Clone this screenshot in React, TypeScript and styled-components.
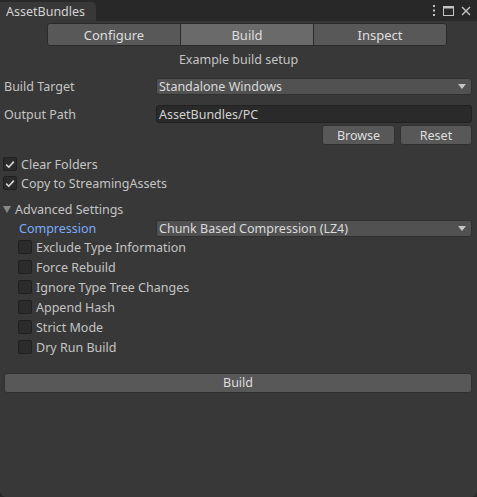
import styled, { createGlobalStyle } from 'styled-components';

const GlobalStyle = createGlobalStyle`
  html, body {
    margin: 0;
    padding: 0;
    background: #282828;
  }
  body {
    font-family: "Noto Sans", "Open Sans", sans-serif;
    font-size: 12.5px;
    color: #c4c4c4;
  }
`;

const Window = styled.div`
  width: 477px;
  height: 497px;
  background: #383838;
  border-radius: 0 0 6px 6px;
  overflow: hidden;
  display: flex;
  flex-direction: column;
`;

const TabBar = styled.div`
  height: 21px;
  background: #282828;
  display: flex;
  align-items: flex-end;
  justify-content: space-between;
`;

const Tab = styled.div`
  height: 19px;
  width: 96px;
  box-sizing: border-box;
  padding-left: 6px;
  background: #383838;
  border-radius: 0 5px 0 0;
  line-height: 19px;
  color: #d2d2d2;
`;

const WindowIcons = styled.div`
  display: flex;
  align-items: center;
  gap: 7px;
  height: 21px;
  padding-right: 6px;
`;

const Toolbar = styled.div`
  display: flex;
  margin: 2px 0 0 47px;
  width: 400px;
  height: 23px;
`;

const ToolButton = styled.div<{ $active?: boolean }>`
  flex: 1;
  box-sizing: border-box;
  display: flex;
  align-items: center;
  justify-content: center;
  background: ${(p) => (p.$active ? '#6a6a6a' : '#585858')};
  border: 1px solid #2a2a2a;
  margin-left: -1px;
  color: #dedede;
  font-size: 13px;
  &:first-child {
    margin-left: 0;
    border-radius: 3px 0 0 3px;
  }
  &:last-child {
    border-radius: 0 3px 3px 0;
  }
`;

const Caption = styled.div`
  text-align: center;
  height: 20px;
  line-height: 20px;
  margin-top: 4px;
`;

const Row = styled.div<{ $h: number; $top: number; $indent?: number }>`
  display: flex;
  align-items: center;
  height: ${(p) => p.$h}px;
  margin-top: ${(p) => p.$top}px;
  padding-left: ${(p) => p.$indent ?? 4}px;
  padding-right: 5px;
`;

const Label = styled.div<{ $blue?: boolean; $w?: number }>`
  width: ${(p) => p.$w ?? 152}px;
  flex-shrink: 0;
  color: ${(p) => (p.$blue ? '#7babfa' : '#c4c4c4')};
`;

const Dropdown = styled.div`
  flex: 1;
  height: 17px;
  box-sizing: border-box;
  background: #515151;
  border: 1px solid #303030;
  border-radius: 3px;
  display: flex;
  align-items: center;
  justify-content: space-between;
  padding: 0 5px 0 2px;
  color: #dadada;
`;

const Caret = styled.div`
  width: 0;
  height: 0;
  border-left: 4px solid transparent;
  border-right: 4px solid transparent;
  border-top: 5px solid #c4c4c4;
`;

const TextField = styled.div`
  flex: 1;
  height: 18px;
  box-sizing: border-box;
  background: #2a2a2a;
  border: 1px solid #212121;
  border-radius: 3px;
  display: flex;
  align-items: center;
  padding-left: 2px;
  color: #d2d2d2;
`;

const ButtonRow = styled.div`
  display: flex;
  justify-content: flex-end;
  gap: 5px;
  padding-right: 5px;
  margin-top: 2px;
`;

const Button = styled.div<{ $w?: number }>`
  width: ${(p) => (p.$w ? `${p.$w}px` : 'auto')};
  flex: ${(p) => (p.$w ? 'none' : 1)};
  height: 20px;
  box-sizing: border-box;
  background: #585858;
  border: 1px solid #303030;
  border-radius: 3px;
  display: flex;
  align-items: center;
  justify-content: center;
  color: #dedede;
`;

const Box = styled.div`
  width: 14px;
  height: 14px;
  box-sizing: border-box;
  background: #2b2b2b;
  border: 1px solid #202020;
  border-radius: 2px;
  margin-right: 4px;
  flex-shrink: 0;
  display: flex;
  align-items: center;
  justify-content: center;
`;

const Foldout = styled.div`
  width: 0;
  height: 0;
  border-left: 4px solid transparent;
  border-right: 4px solid transparent;
  border-top: 7px solid #8a8a8a;
  margin: 0 4px 0 0;
`;

const Check = () => (
  <svg width="10" height="9" viewBox="0 0 10 9">
    <path d="M1.2 4.6 L3.8 7.2 L8.8 1.6" stroke="#d8d8d8" strokeWidth="1.6" fill="none" />
  </svg>
);

type CheckProps = { label: string; checked?: boolean; indent?: number; top: number };

const CheckRow = ({ label, checked, indent = 3, top }: CheckProps) => (
  <Row $h={16} $top={top} $indent={indent}>
    <Box>{checked && <Check />}</Box>
    <span>{label}</span>
  </Row>
);

const advanced = [
  'Exclude Type Information',
  'Force Rebuild',
  'Ignore Type Tree Changes',
  'Append Hash',
  'Strict Mode',
  'Dry Run Build',
];

export default function App() {
  return (
    <>
      <GlobalStyle />
      <Window>
        <TabBar>
          <Tab>AssetBundles</Tab>
          <WindowIcons>
            <svg width="4" height="11" viewBox="0 0 4 11">
              <rect x="1" y="0" width="2" height="2" fill="#c4c4c4" />
              <rect x="1" y="4.5" width="2" height="2" fill="#c4c4c4" />
              <rect x="1" y="9" width="2" height="2" fill="#c4c4c4" />
            </svg>
            <svg width="11" height="10" viewBox="0 0 11 10">
              <rect x="0.5" y="0.5" width="10" height="9" fill="none" stroke="#c4c4c4" />
              <rect x="0.5" y="0.5" width="10" height="2" fill="#c4c4c4" />
            </svg>
            <svg width="10" height="10" viewBox="0 0 10 10">
              <path d="M1 1 L9 9 M9 1 L1 9" stroke="#c4c4c4" strokeWidth="1.4" />
            </svg>
          </WindowIcons>
        </TabBar>
        <Toolbar>
          <ToolButton>Configure</ToolButton>
          <ToolButton $active>Build</ToolButton>
          <ToolButton>Inspect</ToolButton>
        </Toolbar>
        <Caption>Example build setup</Caption>
        <Row $h={18} $top={7}>
          <Label>Build Target</Label>
          <Dropdown>
            <span>Standalone Windows</span>
            <Caret />
          </Dropdown>
        </Row>
        <Row $h={18} $top={10}>
          <Label>Output Path</Label>
          <TextField>AssetBundles/PC</TextField>
        </Row>
        <ButtonRow>
          <Button $w={73}>Browse</Button>
          <Button $w={72}>Reset</Button>
        </ButtonRow>
        <CheckRow label="Clear Folders" checked top={11} />
        <CheckRow label="Copy to StreamingAssets" checked top={3} />
        <Row $h={16} $top={10} $indent={3}>
          <Foldout />
          <span>Advanced Settings</span>
        </Row>
        <Row $h={18} $top={2} $indent={19}>
          <Label $blue $w={137}>Compression</Label>
          <Dropdown>
            <span>Chunk Based Compression (LZ4)</span>
            <Caret />
          </Dropdown>
        </Row>
        {advanced.map((a, i) => (
          <CheckRow key={a} label={a} indent={18} top={i === 0 ? 2 : 4} />
        ))}
        <Row $h={21} $top={17}>
          <Button>Build</Button>
        </Row>
      </Window>
    </>
  );
}
